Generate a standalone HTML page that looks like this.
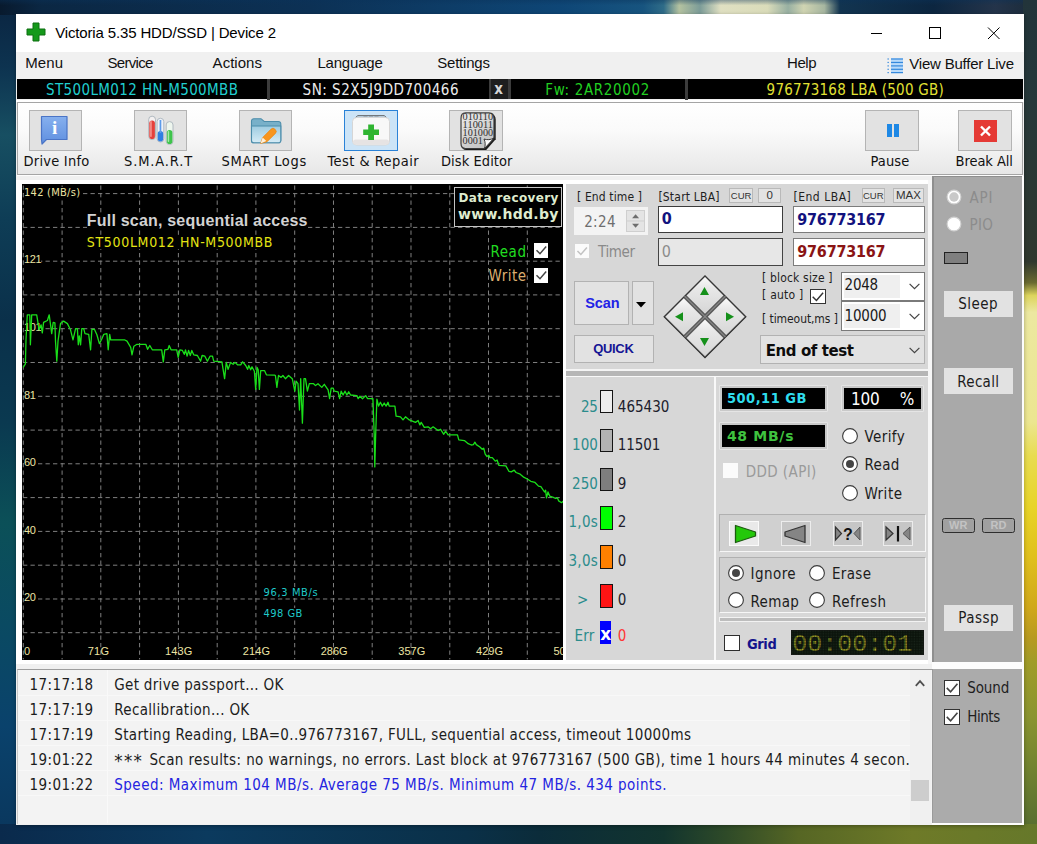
<!DOCTYPE html>
<html lang="en"><head><meta charset="utf-8"><title>Victoria 5.35 HDD/SSD | Device 2</title>
<style>
html,body{margin:0;padding:0}
body{width:1037px;height:844px;overflow:hidden;position:relative;background:#0b3350;font-family:"Liberation Sans",sans-serif}
#root{position:absolute;left:0;top:0;width:1037px;height:844px;overflow:hidden}
#root div,#root svg{position:absolute;box-sizing:border-box}
.t{position:absolute;white-space:pre;line-height:1;margin:0;padding:0}
.s{display:inline-block;width:0;height:0}

</style></head><body><div id="root">
<div id="wall" style="left:0;top:0;width:1037px;height:844px;background:#0b3350"></div>
<div style="left:0;top:0;width:17px;height:844px;background:linear-gradient(180deg,#0a2440 0%,#0d3350 8%,#174f62 16%,#0e3d56 26%,#0a304a 38%,#0a3950 50%,#0b5058 62%,#0a4a62 74%,#0a426c 86%,#0a365c 100%)"></div>
<div style="left:0;top:0;width:1037px;height:15px;background:linear-gradient(180deg,rgba(10,50,90,.400) 0%,rgba(10,50,90,0) 35%),linear-gradient(90deg,#081a2e 0%,#0b2743 4%,#0c3155 30%,#0e4676 54%,#17547f 62%,#2f6c88 64%,#b4c2a0 65.500%,#7c9c98 67.500%,#e0e0c2 69.500%,#dadcba 74%,#98b0a2 76%,#d0d4b2 77.500%,#a6b6a0 79.500%,#123450 81%,#0c2640 90%,#24344a 96%,#1a2a38 100%)"></div>
<div style="left:1023px;top:0;width:14px;height:844px;background:linear-gradient(180deg,#22343a 0%,#26383a 12%,#30382e 31%,#6a6a30 33.500%,#dcd45c 35%,#ece8a0 37%,#ece690 50%,#e8dc50 54%,#e8d428 60%,#e0c01c 66%,#d0a81a 72%,#b89a20 75.500%,#a09c28 78.500%,#8a9430 85%,#6e8030 92%,#506830 100%)"></div>
<div style="left:0;top:824px;width:1037px;height:20px;background:linear-gradient(90deg,#0a2a4c 0%,#0b3a5e 20%,#0a3048 45%,#0b2c3a 52%,#12342e 64%,#2e4a28 70%,#566624 77%,#6e7a28 88%,#66782a 100%)"></div>
<div style="left:16px;top:14px;width:1008px;height:811px;background:#f0f0f0;box-shadow:0 1px 4px rgba(0,0,0,.320);"></div>
<div style="left:16px;top:14px;width:1008px;height:38px;background:#ffffff;"></div>
<svg style="left:26px;top:22px" width="20" height="20" viewBox="0 0 20 20"><path d="M7 1h6v6h6v6h-6v6H7v-6H1V7h6z" fill="#14991a" stroke="#0c6e10" stroke-width="1"/></svg>
<span class="t" style='left:55.20px;top:24.80px;font-size:15px;color:#000;font-family:"Liberation Sans",sans-serif;letter-spacing:-0.148px;'>Victoria 5.35 HDD/SSD | Device 2</span>
<svg style="left:860px;top:20px" width="160" height="26" viewBox="0 0 160 26" fill="none" stroke="#000" stroke-width="1"><path d="M11 13.5h11"/><rect x="69.5" y="7.5" width="11" height="11"/><path d="M128 7.5l11.5 11.5M139.5 7.5L128 19"/></svg>
<div style="left:16px;top:52px;width:1008px;height:27px;background:#f0f0f0;"></div>
<span class="t" style='left:25.30px;top:55.00px;font-size:15px;color:#111;font-family:"Liberation Sans",sans-serif;letter-spacing:0.056px;'>Menu</span>
<span class="t" style='left:107.40px;top:55.00px;font-size:15px;color:#111;font-family:"Liberation Sans",sans-serif;letter-spacing:-0.672px;'>Service</span>
<span class="t" style='left:212.60px;top:55.00px;font-size:15px;color:#111;font-family:"Liberation Sans",sans-serif;letter-spacing:0.033px;'>Actions</span>
<span class="t" style='left:317.40px;top:55.00px;font-size:15px;color:#111;font-family:"Liberation Sans",sans-serif;letter-spacing:-0.193px;'>Language</span>
<span class="t" style='left:437.20px;top:55.00px;font-size:15px;color:#111;font-family:"Liberation Sans",sans-serif;letter-spacing:-0.200px;'>Settings</span>
<span class="t" style='left:787.00px;top:55.00px;font-size:15px;color:#111;font-family:"Liberation Sans",sans-serif;letter-spacing:-0.420px;'>Help</span>
<span class="t" style='left:909.30px;top:56.00px;font-size:15px;color:#111;font-family:"Liberation Sans",sans-serif;letter-spacing:-0.210px;'>View Buffer Live</span>
<svg style="left:887px;top:57px" width="17" height="17" viewBox="0 0 17 17"><rect x="4" y="1.400" width="12" height="14.800" fill="#b8dafa"/><g fill="#3488dc"><rect x=".500" y="1.400" width="1.300" height="1.200"/><rect x="4" y="1.400" width="12" height="1.200"/><rect x=".500" y="4.850" width="1.300" height="1.200"/><rect x="4" y="4.850" width="12" height="1.200"/><rect x=".500" y="8.300" width="1.300" height="1.200"/><rect x="4" y="8.300" width="12" height="1.200"/><rect x=".500" y="11.700" width="1.300" height="1.200"/><rect x="4" y="11.700" width="12" height="1.200"/><rect x=".500" y="15.000" width="1.300" height="1.200"/><rect x="4" y="15.000" width="12" height="1.200"/></g></svg>
<div style="left:17px;top:78.8px;width:1006px;height:20.3px;background:#000;"></div>
<div style="left:266.5px;top:79px;width:3.5px;height:20.5px;background:#3c3c3c;"></div>
<div style="left:489px;top:79px;width:21.5px;height:20px;background:#3c3c3c;"></div>
<div style="left:491.3px;top:79px;width:16.4px;height:20px;background:#1e1e1e;"></div>
<div style="left:685px;top:79px;width:3px;height:20.5px;background:#3c3c3c;"></div>
<span class="t" style='left:46.00px;top:82.80px;font-size:15px;color:#21cfd0;font-family:"DejaVu Sans Condensed","Liberation Sans",sans-serif;letter-spacing:0.378px;'>ST500LM012 HN-M500MBB</span>
<span class="t" style='left:302.60px;top:82.80px;font-size:15px;color:#ececec;font-family:"DejaVu Sans Condensed","Liberation Sans",sans-serif;letter-spacing:0.504px;'>SN: S2X5J9DD700466</span>
<span class="t" style='left:494.30px;top:82.30px;font-size:15px;color:#d6d6d6;font-family:"DejaVu Sans Condensed","Liberation Sans",sans-serif;font-weight:700;'>x</span>
<span class="t" style='left:545.30px;top:82.80px;font-size:15px;color:#22cf22;font-family:"DejaVu Sans Condensed","Liberation Sans",sans-serif;letter-spacing:0.643px;'>Fw: 2AR20002</span>
<span class="t" style='left:766.60px;top:82.80px;font-size:15px;color:#e2e234;font-family:"DejaVu Sans Condensed","Liberation Sans",sans-serif;letter-spacing:0.237px;'>976773168 LBA (500 GB)</span>
<div style="left:16px;top:99.5px;width:1008px;height:2px;background:#ffffff;"></div>
<div style="left:17px;top:101.5px;width:1006px;height:73.6px;background:linear-gradient(180deg,#ffffff 0%,#fafafa 40%,#e7e7e7 100%);border:1px solid #a5a5a5;"></div>
<div style="left:17px;top:175.1px;width:1006px;height:1.2px;background:#fdfdfd;"></div>
<div style="left:28.7px;top:110px;width:53.5px;height:40.5px;background:#e2e2e2;border:1px solid #b4b4b4;"></div>
<div style="left:133.8px;top:110px;width:53.5px;height:40.5px;background:#e2e2e2;border:1px solid #b4b4b4;"></div>
<div style="left:238.8px;top:110px;width:53.5px;height:40.5px;background:#e2e2e2;border:1px solid #b4b4b4;"></div>
<div style="left:449px;top:110px;width:53.5px;height:40.5px;background:#e2e2e2;border:1px solid #b4b4b4;"></div>
<div style="left:344px;top:110px;width:53.5px;height:40.5px;background:#cce4f7;border:1px solid #2a82d7;"></div>
<div style="left:865.2px;top:110px;width:53.5px;height:40.5px;background:#e2e2e2;border:1px solid #b4b4b4;"></div>
<div style="left:958px;top:110px;width:53.5px;height:40.5px;background:#e2e2e2;border:1px solid #b4b4b4;"></div>
<span class="t" style='left:23.60px;top:154.20px;font-size:14.5px;color:#111;font-family:"DejaVu Sans Condensed","Liberation Sans",sans-serif;letter-spacing:0.221px;'>Drive Info</span>
<span class="t" style='left:124.00px;top:154.20px;font-size:14.5px;color:#111;font-family:"DejaVu Sans Condensed","Liberation Sans",sans-serif;letter-spacing:0.863px;'>S.M.A.R.T</span>
<span class="t" style='left:221.50px;top:154.20px;font-size:14.5px;color:#111;font-family:"DejaVu Sans Condensed","Liberation Sans",sans-serif;letter-spacing:0.683px;'>SMART Logs</span>
<span class="t" style='left:327.60px;top:154.20px;font-size:14.5px;color:#111;font-family:"DejaVu Sans Condensed","Liberation Sans",sans-serif;letter-spacing:0.449px;'>Test &amp; Repair</span>
<span class="t" style='left:441.00px;top:154.20px;font-size:14.5px;color:#111;font-family:"DejaVu Sans Condensed","Liberation Sans",sans-serif;letter-spacing:0.063px;'>Disk Editor</span>
<span class="t" style='left:870.40px;top:154.20px;font-size:14.5px;color:#111;font-family:"DejaVu Sans Condensed","Liberation Sans",sans-serif;letter-spacing:0.147px;'>Pause</span>
<span class="t" style='left:955.60px;top:154.20px;font-size:14.5px;color:#111;font-family:"DejaVu Sans Condensed","Liberation Sans",sans-serif;letter-spacing:-0.061px;'>Break All</span>
<svg style="left:40px;top:115px" width="30" height="32" viewBox="0 0 30 32"><defs><linearGradient id="bi" x1="0" y1="0" x2="0" y2="1"><stop offset="0" stop-color="#86b0ee"/><stop offset="1" stop-color="#5f8fe0"/></linearGradient></defs><path d="M1.500 1.500H27V24.500H6.500L2 29 1.500 24.500z" fill="url(#bi)" stroke="#4a74c6" stroke-width="1.200" stroke-linejoin="round"/><text x="14.600" y="18.600" font-family="Liberation Serif,serif" font-weight="700" font-size="19" fill="#fff" text-anchor="middle">i</text></svg>
<svg style="left:147px;top:115px" width="30" height="32" viewBox="0 0 30 32"><g stroke="#a9b3bb" stroke-width=".900"><rect x="1.700" y="1.200" width="6.800" height="23.400" rx="3.300" fill="#f4f1f1"/><rect x="10.100" y="3.300" width="6.700" height="23.700" rx="3.300" fill="#eef2f8"/><rect x="19.200" y="6.600" width="6.800" height="22.900" rx="3.300" fill="#eef6ee"/></g><rect x="2.300" y="5.500" width="5.600" height="18.600" rx="2.800" fill="#e4403c"/><rect x="3.200" y="6" width="1.500" height="16" rx=".700" fill="#f59a96"/><rect x="10.700" y="16" width="5.500" height="10.500" rx="2.700" fill="#2f7fe2"/><rect x="12.600" y="5" width="1.700" height="13" fill="#5c9bea"/><rect x="19.800" y="15" width="5.600" height="14" rx="2.800" fill="#3fc44c"/><rect x="20.700" y="16" width="1.500" height="11" rx=".700" fill="#a6e8ab"/></svg>
<svg style="left:250px;top:116px" width="33" height="30" viewBox="0 0 33 30"><defs><linearGradient id="fo" x1="0" y1="0" x2="0" y2="1"><stop offset="0" stop-color="#9dcbe0"/><stop offset="1" stop-color="#d6ecf6"/></linearGradient></defs><path d="M1.500 5a2.300 2.300 0 0 1 2.300-2.300h7.200l3.200 2.800h14.300a2.300 2.300 0 0 1 2.300 2.300v16.700a2.300 2.300 0 0 1-2.300 2.300h-24.700a2.300 2.300 0 0 1-2.300-2.300z" fill="#78b0c9" stroke="#4c8dab" stroke-width="1.100"/><path d="M1.500 10h29.300v14.500a2.300 2.300 0 0 1-2.300 2.300h-24.700a2.300 2.300 0 0 1-2.300-2.300z" fill="url(#fo)" stroke="#4c8dab" stroke-width="1.100"/><path d="M10.500 27.500l2.200-6 8.400-8.400a2.600 2.600 0 0 1 3.700 0l.6.600a2.600 2.600 0 0 1 0 3.700l-8.400 8.400z" fill="#f7961f" stroke="#e8820c" stroke-width=".700"/><path d="M10.500 27.500l2.200-6 3.600 3.600z" fill="#fdf0dc"/></svg>
<svg style="left:351px;top:113px" width="40" height="35" viewBox="0 0 40 35"><path d="M3.500 6l3-3.300h27l3 3.300" fill="none" stroke="#5e5e5e" stroke-width="1"/><path d="M12.500 4.200h15" fill="none" stroke="#5a5a5a" stroke-width="1.100" stroke-dasharray="4 1.500"/><rect x="1.500" y="4.500" width="37" height="27.500" rx="4" fill="#f8f8f8" stroke="#d6d6d6"/><rect x="2" y="26.500" width="36" height="5.200" rx="2.600" fill="#e6e3e3"/><path d="M17.200 11.500h5.800v5h5v5.600h-5v5h-5.800v-5h-5v-5.600h5z" fill="#2eb430"/></svg>
<svg style="left:459px;top:111px" width="38" height="40" viewBox="0 0 38 40"><defs><linearGradient id="sh" x1="0" y1="0" x2=".600" y2="1"><stop offset="0" stop-color="#ececec"/><stop offset="1" stop-color="#c4c4c4"/></linearGradient></defs><path d="M6.500 2.300H30.500Q36 2.300 36 8V27.500L26.500 38.300H6.500Q2 38.300 2 33V8Q2 2.300 6.500 2.300z" fill="#1c1c1c" transform="translate(.700 .700)"/><path d="M6.500 1.800H30Q35 1.800 35 7.500V27L25.500 37.500H6.500Q2 37.500 2 32.500V7.500Q2 1.800 6.500 1.800z" fill="url(#sh)" stroke="#3c3c3c" stroke-width="1.200"/><path d="M35 27C31.500 29 28 29 25 28 26.500 31 26.500 34.500 25.500 37.500z" fill="#fbfbfb" stroke="#2a2a2a" stroke-width=".900"/><g font-family="Liberation Serif,serif" font-size="10" fill="#303030"><text x="3.600" y="9.400" textLength="30.500" lengthAdjust="spacingAndGlyphs">010110</text><text x="3.600" y="17.100" textLength="30.500" lengthAdjust="spacingAndGlyphs">110011</text><text x="3.600" y="24.800" textLength="30.500" lengthAdjust="spacingAndGlyphs">101000</text><text x="3.600" y="32.500" textLength="20.300" lengthAdjust="spacingAndGlyphs">0001</text></g></svg>
<div style="left:886.5px;top:124.4px;width:5.4px;height:12.8px;background:#1e88e5;"></div>
<div style="left:894px;top:124.4px;width:5.4px;height:12.8px;background:#1e88e5;"></div>
<svg style="left:973.500px;top:120px" width="23" height="22" viewBox="0 0 23 22"><rect width="23" height="22" fill="#e53a35"/><path d="M7 6.500l9 9M16 6.500l-9 9" stroke="#fff" stroke-width="2.400" fill="none"/></svg>
<div style="left:16px;top:179.6px;width:550px;height:484px;background:#ffffff;"></div>
<div style="left:21.6px;top:184.2px;width:541.9px;height:475.40000000000003px;background:#000;"></div>
<svg style="left:21.6px;top:184.2px" width="541.9" height="475.4" viewBox="21.6 184.2 541.9 475.4"><g stroke="#808080" stroke-width="1" stroke-dasharray="4.3 3.2" fill="none"><path d="M22.9 185.7V659.6"/><path d="M61.7 185.7V659.6"/><path d="M100.4 185.7V659.6"/><path d="M139.2 185.7V659.6"/><path d="M178.0 185.7V659.6"/><path d="M216.8 185.7V659.6"/><path d="M255.5 185.7V659.6"/><path d="M294.3 185.7V659.6"/><path d="M333.1 185.7V659.6"/><path d="M371.8 185.7V659.6"/><path d="M410.6 185.7V659.6"/><path d="M449.4 185.7V659.6"/><path d="M488.1 185.7V659.6"/><path d="M526.9 185.7V659.6"/><path d="M22.6 193.8H563.5"/><path d="M22.6 227.6H563.5"/><path d="M22.6 261.4H563.5"/><path d="M22.6 295.1H563.5"/><path d="M22.6 328.9H563.5"/><path d="M22.6 362.7H563.5"/><path d="M22.6 396.5H563.5"/><path d="M22.6 430.3H563.5"/><path d="M22.6 464.0H563.5"/><path d="M22.6 497.8H563.5"/><path d="M22.6 531.6H563.5"/><path d="M22.6 565.4H563.5"/><path d="M22.6 599.2H563.5"/><path d="M22.6 632.9H563.5"/></g></svg>
<span class="t" style='left:24.00px;top:186.71px;font-size:11px;color:#ece4a4;font-family:"DejaVu Sans Condensed","Liberation Sans",sans-serif;letter-spacing:0.269px;background:#000;'>142 (MB/s)</span>
<span class="t" style='left:24.00px;top:254.40px;font-size:11px;color:#ece4a4;font-family:"Liberation Sans",sans-serif;letter-spacing:-0.330px;background:#000;'>121</span>
<span class="t" style='left:24.00px;top:322.01px;font-size:11px;color:#ece4a4;font-family:"Liberation Sans",sans-serif;letter-spacing:-0.330px;background:#000;'>101</span>
<span class="t" style='left:24.00px;top:389.60px;font-size:11px;color:#ece4a4;font-family:"Liberation Sans",sans-serif;letter-spacing:-0.250px;background:#000;'>81</span>
<span class="t" style='left:24.00px;top:457.21px;font-size:11px;color:#ece4a4;font-family:"Liberation Sans",sans-serif;letter-spacing:-0.250px;background:#000;'>60</span>
<span class="t" style='left:24.00px;top:524.81px;font-size:11px;color:#ece4a4;font-family:"Liberation Sans",sans-serif;letter-spacing:-0.250px;background:#000;'>40</span>
<span class="t" style='left:24.00px;top:591.71px;font-size:11px;color:#ece4a4;font-family:"Liberation Sans",sans-serif;letter-spacing:-0.250px;background:#000;'>20</span>
<svg style="left:21.6px;top:184.2px" width="541.9" height="475.4" viewBox="21.6 184.2 541.9 475.4"><polyline fill="none" stroke="#1ade1a" stroke-width="1.3" stroke-linejoin="round" points="22.8,367.7 25.0,364.0 25.6,340.0 26.9,315.0 29.4,315.0 30.0,345.0 31.3,315.0 36.3,315.0 37.5,322.6 38.8,330.0 40.7,325.0 41.9,333.0 43.2,322.6 47.0,320.7 48.8,315.0 50.0,323.8 51.3,333.8 52.8,322.6 54.5,323.0 55.1,341.4 56.4,361.4 57.6,341.4 60.1,323.8 63.2,321.3 67.0,323.8 70.1,330.0 72.6,340.0 75.2,328.8 77.0,328.8 77.9,345.0 78.9,336.0 80.2,345.0 81.4,328.8 83.3,328.8 84.6,333.8 88.3,334.5 90.2,350.0 91.5,329.5 94.0,329.5 96.5,335.0 99.0,343.9 101.5,338.9 103.4,334.5 106.5,333.8 107.8,350.0 109.3,334.5 110.3,340.0 124.0,340.0 126.6,341.4 130.3,347.6 131.6,355.0 133.5,346.4 136.6,344.5 145.4,344.5 147.2,349.5 149.4,345.7 151.9,350.0 161.3,350.0 162.9,362.0 164.4,350.0 167.6,349.5 168.8,345.7 170.7,350.0 176.3,350.0 177.8,357.6 179.5,350.0 182.0,350.7 183.9,354.5 185.1,350.0 186.7,356.4 188.2,350.7 189.9,355.7 191.4,350.7 193.3,355.0 197.0,355.7 200.2,361.4 201.7,355.7 204.5,356.4 207.0,361.4 209.6,356.4 212.1,356.4 213.3,361.4 221.5,362.0 224.2,378.9 225.9,362.6 227.7,369.5 230.2,362.6 232.7,364.5 234.6,362.6 237.1,365.0 240.3,365.0 242.2,362.0 245.3,365.7 247.2,369.5 248.4,365.7 250.3,370.0 251.6,367.0 254.0,371.4 255.3,389.6 256.6,367.6 257.8,370.0 259.0,389.6 260.3,370.8 264.1,370.8 266.0,375.0 274.1,375.3 275.0,375.7 276.5,387.6 278.1,375.7 280.7,377.6 282.5,375.7 285.0,378.9 288.2,375.7 291.9,378.9 294.4,391.4 295.7,381.4 297.6,383.9 299.1,410.2 300.3,378.9 302.0,423.4 303.6,378.9 305.1,378.9 307.0,391.4 308.9,383.9 313.2,383.9 315.1,385.8 317.6,383.9 321.4,387.6 323.9,384.5 327.7,390.1 329.2,398.9 330.8,388.3 332.7,388.3 333.9,391.4 337.7,392.0 339.2,398.9 340.8,391.4 342.7,395.2 344.6,391.4 346.5,395.2 348.3,392.0 350.2,395.2 356.5,395.8 357.8,398.9 359.6,396.4 362.1,398.9 365.3,395.8 367.2,398.9 372.5,398.8 373.8,433.9 374.4,467.1 375.3,433.9 376.5,399.4 378.2,406.3 380.0,402.5 381.9,406.3 383.8,403.2 385.7,406.3 387.6,402.5 388.8,406.3 394.5,406.3 395.7,416.3 400.1,417.0 402.6,420.1 405.1,417.0 408.9,420.1 415.1,422.6 417.7,420.7 419.5,425.1 420.8,422.6 423.9,427.6 427.7,427.0 430.2,428.9 432.7,427.0 437.7,430.7 440.2,429.5 443.4,434.5 445.2,431.4 447.7,435.1 457.1,435.1 458.4,440.1 464.0,440.8 467.8,443.9 470.9,445.2 473.0,444.8 474.5,442.4 475.9,444.8 479.5,447.2 481.8,449.5 483.3,448.4 484.8,454.3 486.6,456.7 488.4,455.5 489.5,457.8 491.9,457.8 494.9,461.4 496.7,460.2 498.4,465.5 505.5,466.1 508.5,471.5 510.9,472.1 513.8,470.3 515.6,472.7 519.8,474.4 523.3,477.4 526.9,479.2 530.4,481.5 534.6,482.7 538.1,486.3 540.5,486.9 544.1,492.2 545.2,490.4 546.1,498.1 547.6,492.2 549.4,496.4 552.9,497.5 555.3,498.7 557.1,498.1 558.3,501.1 561.2,502.9 563.0,501.1"/></svg>
<span class="t" style='left:24.00px;top:645.71px;font-size:11px;color:#ece4a4;font-family:"Liberation Sans",sans-serif;'>0</span>
<span class="t" style='left:87.70px;top:645.71px;font-size:11px;color:#ece4a4;font-family:"Liberation Sans",sans-serif;letter-spacing:0.252px;'>71G</span>
<span class="t" style='left:165.00px;top:645.71px;font-size:11px;color:#ece4a4;font-family:"Liberation Sans",sans-serif;letter-spacing:0.126px;'>143G</span>
<span class="t" style='left:242.80px;top:645.71px;font-size:11px;color:#ece4a4;font-family:"Liberation Sans",sans-serif;letter-spacing:0.126px;'>214G</span>
<span class="t" style='left:320.80px;top:645.71px;font-size:11px;color:#ece4a4;font-family:"Liberation Sans",sans-serif;letter-spacing:-0.074px;'>286G</span>
<span class="t" style='left:398.30px;top:645.71px;font-size:11px;color:#ece4a4;font-family:"Liberation Sans",sans-serif;letter-spacing:0.026px;'>357G</span>
<span class="t" style='left:476.00px;top:645.71px;font-size:11px;color:#ece4a4;font-family:"Liberation Sans",sans-serif;letter-spacing:0.026px;'>429G</span>
<span class="t" style='left:553.40px;top:645.71px;font-size:11px;color:#ece4a4;font-family:"Liberation Sans",sans-serif;clip-path:inset(0 2.5px 0 0);'>50</span>
<span class="t" style='left:86.80px;top:213.40px;font-size:16px;color:#d2d2d2;font-family:"Liberation Sans",sans-serif;font-weight:700;letter-spacing:0.203px;background:#000;'>Full scan, sequential access</span>
<span class="t" style='left:86.80px;top:234.70px;font-size:14px;color:#e4e414;font-family:"DejaVu Sans Condensed","Liberation Sans",sans-serif;letter-spacing:0.678px;background:#000;'>ST500LM012 HN-M500MBB</span>
<span class="t" style='left:263.60px;top:586.71px;font-size:11px;color:#1fc9c9;font-family:"DejaVu Sans Condensed","Liberation Sans",sans-serif;letter-spacing:0.637px;background:#000;'>96,3 MB/s</span>
<span class="t" style='left:263.60px;top:608.01px;font-size:11px;color:#1fc9c9;font-family:"DejaVu Sans Condensed","Liberation Sans",sans-serif;letter-spacing:0.440px;background:#000;'>498 GB</span>
<div style="left:454px;top:186.6px;width:108.4px;height:40px;background:#000;border:1px solid #c4c4c4;"></div>
<span class="t" style='left:458.50px;top:191.70px;font-size:12px;color:#dfeccf;font-family:"DejaVu Sans","Liberation Sans",sans-serif;font-weight:700;letter-spacing:0.393px;'>Data recovery</span>
<span class="t" style='left:458.00px;top:207.20px;font-size:14px;color:#dfeccf;font-family:"DejaVu Sans","Liberation Sans",sans-serif;font-weight:700;letter-spacing:0.300px;'>www.hdd.by</span>
<span class="t" style='left:490.50px;top:244.71px;font-size:15px;color:#20dc20;font-family:"DejaVu Sans Condensed","Liberation Sans",sans-serif;letter-spacing:0.547px;background:#000;'>Read</span>
<span class="t" style='left:488.60px;top:269.30px;font-size:15px;color:#dcae70;font-family:"DejaVu Sans Condensed","Liberation Sans",sans-serif;letter-spacing:0.459px;background:#000;'>Write</span>
<div style="left:533.5px;top:243px;width:14.5px;height:14.5px;background:#fff;"></div><svg style="left:533.5px;top:243px" width="14.5" height="14.5" viewBox="0 0 15 15"><path d="M2.600 7.400l3.600 3.700L12.600 3.600" fill="none" stroke="#444" stroke-width="1.5"/></svg>
<div style="left:533.5px;top:268.2px;width:14.5px;height:14.5px;background:#fff;"></div><svg style="left:533.5px;top:268.2px" width="14.5" height="14.5" viewBox="0 0 15 15"><path d="M2.600 7.400l3.600 3.700L12.600 3.600" fill="none" stroke="#444" stroke-width="1.5"/></svg>
<div style="left:565.6px;top:180px;width:363px;height:4px;background:#fff;"></div>
<div style="left:565.6px;top:184px;width:362px;height:185px;background:#d7d7d7;"></div>
<div style="left:565.6px;top:369px;width:362px;height:2px;background:#f4f4f4;"></div>
<div style="left:565.6px;top:371px;width:362px;height:5px;background:#b6b6b6;"></div>
<div style="left:927.6px;top:180px;width:5px;height:484px;background:#f6f6f6;"></div>
<span class="t" style='left:577.00px;top:190.81px;font-size:12px;color:#1e1e1e;font-family:"DejaVu Sans Condensed","Liberation Sans",sans-serif;letter-spacing:0.125px;'>[ End time ]</span>
<div style="left:573.8px;top:207.3px;width:74px;height:27.6px;background:#f3f3f3;"></div>
<span class="t" style='left:584.20px;top:214.80px;font-size:15px;color:#6e6e6e;font-family:"DejaVu Sans Condensed","Liberation Sans",sans-serif;letter-spacing:0.329px;'>2:24</span>
<div style="left:626px;top:209.8px;width:19.2px;height:22px;background:#e4e4e4;border:1px solid #cfcfcf;"></div>
<svg style="left:626px;top:209.800px" width="19.200" height="22" viewBox="0 0 19 22"><path d="M0 11h19" stroke="#cfcfcf"/><path d="M6 8.200l3.500-4 3.500 4zM6 13.800l3.500 4 3.500-4z" fill="#6e6e6e"/></svg>
<div style="left:574.8px;top:244.3px;width:14.2px;height:14.2px;background:#fbfbfb;"></div><svg style="left:574.8px;top:244.3px" width="14.2" height="14.2" viewBox="0 0 15 15"><path d="M2.600 7.400l3.600 3.700L12.600 3.600" fill="none" stroke="#c2c2c2" stroke-width="1.6"/></svg>
<span class="t" style='left:598.00px;top:244.80px;font-size:15px;color:#8a8a8a;font-family:"DejaVu Sans Condensed","Liberation Sans",sans-serif;letter-spacing:-0.383px;'>Timer</span>
<span class="t" style='left:658.40px;top:190.61px;font-size:12px;color:#1e1e1e;font-family:"DejaVu Sans Condensed","Liberation Sans",sans-serif;letter-spacing:0.207px;'>[Start LBA]</span>
<span class="t" style='left:793.40px;top:190.61px;font-size:12px;color:#1e1e1e;font-family:"DejaVu Sans Condensed","Liberation Sans",sans-serif;letter-spacing:0.527px;'>[End LBA]</span>
<div style="left:729.3px;top:187.6px;width:23.700000000000045px;height:15.3px;background:#e3e3e3;border:1px solid #b9b9b9;"></div>
<div style="left:729.3px;top:187.600px;width:23.7px;height:15.300px;line-height:15.500px;text-align:center;font-size:9.5px;color:#333;font-family:"DejaVu Sans Condensed","Liberation Sans",sans-serif">CUR</div>
<div style="left:758.2px;top:187.6px;width:22.799999999999955px;height:15.3px;background:#e3e3e3;border:1px solid #b9b9b9;"></div>
<div style="left:758.2px;top:187.600px;width:22.8px;height:15.300px;line-height:15.500px;text-align:center;font-size:11.5px;color:#333;font-family:"DejaVu Sans Condensed","Liberation Sans",sans-serif">0</div>
<div style="left:861.7px;top:187.6px;width:23.199999999999932px;height:15.3px;background:#e3e3e3;border:1px solid #b9b9b9;"></div>
<div style="left:861.7px;top:187.600px;width:23.2px;height:15.300px;line-height:15.500px;text-align:center;font-size:9.5px;color:#333;font-family:"DejaVu Sans Condensed","Liberation Sans",sans-serif">CUR</div>
<div style="left:893.2px;top:187.6px;width:30.399999999999977px;height:15.3px;background:#e3e3e3;border:1px solid #b9b9b9;"></div>
<div style="left:893.2px;top:187.600px;width:30.4px;height:15.300px;line-height:15.500px;text-align:center;font-size:11.5px;color:#333;font-family:"DejaVu Sans Condensed","Liberation Sans",sans-serif">MAX</div>
<div style="left:657.5px;top:206px;width:125.3px;height:27.2px;background:#fff;border:1.500px solid #3c3c3c;"></div>
<div style="left:657.5px;top:238.2px;width:125.3px;height:27.4px;background:#e7e7e7;border:1.500px solid #444;"></div>
<div style="left:793px;top:206px;width:132px;height:27.2px;background:#fff;border:1px solid #7c7c7c;"></div>
<div style="left:793px;top:238.2px;width:132px;height:27.4px;background:#fff;border:1px solid #7c7c7c;"></div>
<span class="t" style='left:661.80px;top:211.31px;font-size:16px;color:#12127e;font-family:"DejaVu Sans Condensed","Liberation Sans",sans-serif;font-weight:700;'>0</span>
<span class="t" style='left:661.80px;top:243.51px;font-size:16px;color:#8c8c8c;font-family:"DejaVu Sans Condensed","Liberation Sans",sans-serif;'>0</span>
<span class="t" style='left:797.30px;top:211.51px;font-size:16px;color:#12127e;font-family:"DejaVu Sans Condensed","Liberation Sans",sans-serif;font-weight:700;letter-spacing:-0.230px;'>976773167</span>
<span class="t" style='left:797.30px;top:243.81px;font-size:16px;color:#8a1414;font-family:"DejaVu Sans Condensed","Liberation Sans",sans-serif;font-weight:700;letter-spacing:-0.230px;'>976773167</span>
<div style="left:574.2px;top:281.3px;width:55.3px;height:44px;background:#e2e2e2;border:1px solid #b2b2b2;"></div>
<span class="t" style='left:585.30px;top:295.81px;font-size:14.5px;color:#2222e6;font-family:"Liberation Sans",sans-serif;font-weight:700;letter-spacing:-0.124px;'>Scan</span>
<div style="left:631.9px;top:281.3px;width:22px;height:44px;background:#e2e2e2;border:1px solid #b2b2b2;"></div>
<svg style="left:636px;top:302.300px" width="10" height="6" viewBox="0 0 10 6"><path d="M0 0h10L5 5.500z" fill="#000"/></svg>
<div style="left:574.2px;top:335.3px;width:79.7px;height:27.6px;background:#e2e2e2;border:1px solid #b2b2b2;"></div>
<span class="t" style='left:593.30px;top:342.01px;font-size:13px;color:#151594;font-family:"Liberation Sans",sans-serif;font-weight:700;letter-spacing:-0.348px;'>QUICK</span>
<svg style="left:660px;top:272px" width="90" height="90" viewBox="-45 -45 90 90"><defs><linearGradient id="dg" x1="0" y1="0" x2="1" y2="1"><stop offset="0" stop-color="#fafafa"/><stop offset=".3" stop-color="#e8e8e8"/><stop offset="1" stop-color="#d6d6d6"/></linearGradient></defs><g transform="translate(0 -0.300) rotate(45)"><rect x="-29" y="-29" width="58" height="58" fill="#5a5a5a" stroke="#2e2e2e" stroke-width="1"/><rect x="-28" y="-28" width="26" height="26" fill="url(#dg)"/><rect x="2" y="-28" width="26" height="26" fill="url(#dg)"/><rect x="-28" y="2" width="26" height="26" fill="url(#dg)"/><rect x="2" y="2" width="26" height="26" fill="url(#dg)"/><path d="M-29 0h58M0 -29v58" stroke="#8a8a8a" stroke-width="1"/></g><g fill="#15901a"><path d="M-0.500 -30l4.500 8h-9z"/><path d="M-0.500 29l4.500 -8h-9z"/><path d="M-30 -0.300l8 -4.500v9z"/><path d="M29 -0.300l-8 -4.500v9z"/></g></svg>
<span class="t" style='left:762.10px;top:271.91px;font-size:12px;color:#1e1e1e;font-family:"DejaVu Sans Condensed","Liberation Sans",sans-serif;letter-spacing:0.162px;'>[ block size ]</span>
<span class="t" style='left:762.10px;top:289.41px;font-size:12px;color:#1e1e1e;font-family:"DejaVu Sans Condensed","Liberation Sans",sans-serif;letter-spacing:0.217px;'>[ auto ]</span>
<span class="t" style='left:762.10px;top:312.91px;font-size:12px;color:#1e1e1e;font-family:"DejaVu Sans Condensed","Liberation Sans",sans-serif;letter-spacing:-0.086px;'>[ timeout,ms ]</span>
<div style="left:810.4px;top:288.6px;width:15.6px;height:15.6px;background:#fff;border:1px solid #333;"></div><svg style="left:810.4px;top:288.6px" width="15.6" height="15.6" viewBox="0 0 15 15"><path d="M2.600 7.400l3.600 3.700L12.600 3.600" fill="none" stroke="#333" stroke-width="1.4"/></svg>
<div style="left:840.7px;top:271.5px;width:84px;height:29.2px;background:#fff;border:1px solid #7a7a7a;"></div>
<div style="left:843.7px;top:274.5px;width:56px;height:23.2px;background:#efefef;"></div>
<svg style="left:908.7px;top:283.1px" width="11" height="7" viewBox="0 0 11 7"><path d="M.600 .800l4.900 4.900 4.900-4.900" fill="none" stroke="#444" stroke-width="1.200"/></svg>
<div style="left:840.7px;top:301.4px;width:84px;height:29.2px;background:#fff;border:1px solid #7a7a7a;"></div>
<div style="left:843.7px;top:304.4px;width:56px;height:23.2px;background:#efefef;"></div>
<svg style="left:908.7px;top:313.0px" width="11" height="7" viewBox="0 0 11 7"><path d="M.600 .800l4.900 4.900 4.900-4.900" fill="none" stroke="#444" stroke-width="1.200"/></svg>
<span class="t" style='left:844.60px;top:278.41px;font-size:15px;color:#1a1a1a;font-family:"DejaVu Sans Condensed","Liberation Sans",sans-serif;letter-spacing:-0.248px;'>2048</span>
<span class="t" style='left:844.60px;top:308.80px;font-size:15px;color:#1a1a1a;font-family:"DejaVu Sans Condensed","Liberation Sans",sans-serif;letter-spacing:-0.230px;'>10000</span>
<div style="left:760.4px;top:335.4px;width:164.3px;height:28.6px;background:#e2e2e2;border:1px solid #b2b2b2;"></div>
<svg style="left:908.7px;top:346.7px" width="11" height="7" viewBox="0 0 11 7"><path d="M.600 .800l4.900 4.900 4.900-4.900" fill="none" stroke="#444" stroke-width="1.200"/></svg>
<span class="t" style='left:765.70px;top:344.00px;font-size:15px;color:#0c0c0c;font-family:"DejaVu Sans","Liberation Sans",sans-serif;font-weight:700;letter-spacing:-0.419px;'>End of test</span>
<div style="left:565.6px;top:376px;width:362px;height:1.2px;background:#f8f8f8;"></div>
<div style="left:565.6px;top:377px;width:148.6px;height:282.5px;background:#d7d7d7;"></div>
<div style="left:714.2px;top:377px;width:1.6px;height:282.5px;background:#f8f8f8;"></div>
<div style="left:715.8px;top:377px;width:211.8px;height:282.5px;background:#d7d7d7;"></div>
<div style="left:565.6px;top:659.5px;width:362px;height:4px;background:#fff;"></div>
<span class="t" style='left:581.00px;top:399.91px;font-size:15px;color:#2b8c8c;font-family:"DejaVu Sans Condensed","Liberation Sans",sans-serif;letter-spacing:-0.372px;'>25</span>
<div style="left:600px;top:389.6px;width:12.9px;height:23.8px;background:#ededed;border:1.300px solid #141414;"></div>
<span class="t" style='left:617.80px;top:399.91px;font-size:15px;color:#20202c;font-family:"DejaVu Sans Condensed","Liberation Sans",sans-serif;'>465430</span>
<span class="t" style='left:572.10px;top:437.91px;font-size:15px;color:#2b8c8c;font-family:"DejaVu Sans Condensed","Liberation Sans",sans-serif;letter-spacing:-0.033px;'>100</span>
<div style="left:600px;top:428.6px;width:12.9px;height:23.8px;background:#b2b2b2;border:1.300px solid #141414;"></div>
<span class="t" style='left:617.80px;top:437.91px;font-size:15px;color:#20202c;font-family:"DejaVu Sans Condensed","Liberation Sans",sans-serif;letter-spacing:-0.080px;'>11501</span>
<span class="t" style='left:572.10px;top:477.00px;font-size:15px;color:#2b8c8c;font-family:"DejaVu Sans Condensed","Liberation Sans",sans-serif;letter-spacing:-0.033px;'>250</span>
<div style="left:600px;top:467.7px;width:12.9px;height:23.8px;background:#7e7e7e;border:1.300px solid #141414;"></div>
<span class="t" style='left:617.80px;top:477.00px;font-size:15px;color:#20202c;font-family:"DejaVu Sans Condensed","Liberation Sans",sans-serif;'>9</span>
<span class="t" style='left:568.50px;top:514.80px;font-size:15px;color:#2b8c8c;font-family:"DejaVu Sans Condensed","Liberation Sans",sans-serif;letter-spacing:0.272px;'>1,0s</span>
<div style="left:600px;top:506px;width:12.9px;height:23.8px;background:#00ff00;border:1.300px solid #141414;"></div>
<span class="t" style='left:617.80px;top:514.80px;font-size:15px;color:#20202c;font-family:"DejaVu Sans Condensed","Liberation Sans",sans-serif;'>2</span>
<span class="t" style='left:568.50px;top:553.91px;font-size:15px;color:#2b8c8c;font-family:"DejaVu Sans Condensed","Liberation Sans",sans-serif;letter-spacing:0.272px;'>3,0s</span>
<div style="left:600px;top:545px;width:12.9px;height:23.8px;background:#ff8000;border:1.300px solid #141414;"></div>
<span class="t" style='left:617.80px;top:553.91px;font-size:15px;color:#20202c;font-family:"DejaVu Sans Condensed","Liberation Sans",sans-serif;'>0</span>
<span class="t" style='left:577.00px;top:593.21px;font-size:15px;color:#2b8c8c;font-family:"DejaVu Sans Condensed","Liberation Sans",sans-serif;'>&gt;</span>
<div style="left:600px;top:584px;width:12.9px;height:23.8px;background:#ff1414;border:1.300px solid #141414;"></div>
<span class="t" style='left:617.80px;top:593.21px;font-size:15px;color:#20202c;font-family:"DejaVu Sans Condensed","Liberation Sans",sans-serif;'>0</span>
<span class="t" style='left:574.50px;top:628.50px;font-size:15px;color:#2b8c8c;font-family:"DejaVu Sans Condensed","Liberation Sans",sans-serif;letter-spacing:0.220px;'>Err</span>
<div style="left:599.9px;top:621px;width:11.6px;height:22.6px;background:#0000fe;"></div>
<span class="t" style='left:600.20px;top:626.31px;font-size:17px;color:#fff;font-family:"DejaVu Sans","Liberation Sans",sans-serif;font-weight:700;'>x</span>
<span class="t" style='left:617.80px;top:628.50px;font-size:15px;color:#ff3434;font-family:"DejaVu Sans Condensed","Liberation Sans",sans-serif;'>0</span>
<div style="left:719.8px;top:385.6px;width:107.3px;height:25.6px;background:#000;border:2px solid #c9c9c9;box-shadow:0 0 0 .600px #efefef;"></div>
<div style="left:841.9px;top:385.6px;width:81.1px;height:25.6px;background:#000;border:2px solid #c9c9c9;box-shadow:0 0 0 .600px #efefef;"></div>
<div style="left:719.8px;top:422.7px;width:107.3px;height:26.5px;background:#000;border:2px solid #c9c9c9;box-shadow:0 0 0 .600px #efefef;"></div>
<span class="t" style='left:726.90px;top:391.20px;font-size:14.5px;color:#2fdcec;font-family:"DejaVu Sans Condensed","Liberation Sans",sans-serif;font-weight:700;letter-spacing:0.509px;'>500,11 GB</span>
<span class="t" style='left:851.00px;top:391.11px;font-size:17px;color:#fff;font-family:"DejaVu Sans Condensed","Liberation Sans",sans-serif;letter-spacing:-0.194px;'>100</span>
<span class="t" style='left:899.80px;top:391.11px;font-size:17px;color:#fff;font-family:"DejaVu Sans Condensed","Liberation Sans",sans-serif;'>%</span>
<span class="t" style='left:726.90px;top:429.20px;font-size:14px;color:#3fc23f;font-family:"DejaVu Sans","Liberation Sans",sans-serif;font-weight:700;letter-spacing:0.699px;'>48 MB/s</span>
<div style="left:723.4px;top:463.3px;width:14.6px;height:14.6px;background:#fbfbfb;"></div>
<span class="t" style='left:745.80px;top:465.41px;font-size:15px;color:#9a9a9a;font-family:"DejaVu Sans Condensed","Liberation Sans",sans-serif;letter-spacing:0.395px;'>DDD (API)</span>
<svg style="left:839.5px;top:425.6px" width="20" height="20" viewBox="0 0 20 20"><circle cx="10" cy="10" r="7.4" fill="#fff" stroke="#3a3a3a" stroke-width="1.100"/></svg>
<span class="t" style='left:864.40px;top:429.61px;font-size:15px;color:#1c1c1c;font-family:"DejaVu Sans Condensed","Liberation Sans",sans-serif;letter-spacing:0.452px;'>Verify</span>
<svg style="left:839.5px;top:454.4px" width="20" height="20" viewBox="0 0 20 20"><circle cx="10" cy="10" r="7.4" fill="#fff" stroke="#3a3a3a" stroke-width="1.100"/><circle cx="10" cy="10" r="4.0" fill="#444"/></svg>
<span class="t" style='left:864.40px;top:458.41px;font-size:15px;color:#1c1c1c;font-family:"DejaVu Sans Condensed","Liberation Sans",sans-serif;letter-spacing:0.380px;'>Read</span>
<svg style="left:839.5px;top:483.2px" width="20" height="20" viewBox="0 0 20 20"><circle cx="10" cy="10" r="7.4" fill="#fff" stroke="#3a3a3a" stroke-width="1.100"/></svg>
<span class="t" style='left:864.40px;top:487.41px;font-size:15px;color:#1c1c1c;font-family:"DejaVu Sans Condensed","Liberation Sans",sans-serif;letter-spacing:0.509px;'>Write</span>
<div style="left:719.1px;top:514.1px;width:206.7px;height:37.5px;background:#d0d0d0;border:1px solid;border-color:#b0b0b0 #f6f6f6 #f6f6f6 #b0b0b0;"></div>
<div style="left:729.1px;top:521.3px;width:30.4px;height:24.3px;background:#e9e9e9;border:1.500px solid #fafafa;"></div>
<svg style="left:734px;top:524px" width="24" height="20" viewBox="0 0 24 20"><path d="M1.500 1.500v17l20-6.500v-4z" fill="#24c80a" stroke="#1c5c10" stroke-width="1.300" stroke-linejoin="round"/></svg>
<div style="left:780.5px;top:521.3px;width:30.4px;height:24.3px;background:#c6c6c6;border:1px solid #ededed;"></div>
<svg style="left:783px;top:524px" width="24" height="20" viewBox="0 0 24 20"><path d="M22 1.500v17l-20-6.500v-4z" fill="#858585" stroke="#333" stroke-width="1.300" stroke-linejoin="round"/></svg>
<div style="left:832.6px;top:521.3px;width:30px;height:24.3px;background:#c6c6c6;border:1px solid #ededed;"></div>
<svg style="left:834px;top:524px" width="28" height="20" viewBox="0 0 28 20"><path d="M1.500 3v13l6-6.500z" fill="#858585" stroke="#333" stroke-width="1.200"/><path d="M26 3v13l-6-6.500z" fill="#858585" stroke="#555" stroke-width="1"/><text x="13.800" y="16" text-anchor="middle" font-family="Liberation Sans,sans-serif" font-weight="700" font-size="16" fill="#111">?</text></svg>
<div style="left:882.5px;top:521.3px;width:30.4px;height:24.3px;background:#c6c6c6;border:1px solid #ededed;"></div>
<svg style="left:884px;top:524px" width="28" height="20" viewBox="0 0 28 20"><path d="M2 3v13l7-6.500z" fill="#858585" stroke="#333" stroke-width="1.200"/><path d="M26 3v13l-7-6.500z" fill="#858585" stroke="#555" stroke-width="1"/><path d="M14 2v15.500" stroke="#111" stroke-width="2.200"/></svg>
<div style="left:719.1px;top:557.1px;width:206.7px;height:56px;background:#d0d0d0;border:1px solid;border-color:#b0b0b0 #f6f6f6 #f6f6f6 #b0b0b0;"></div>
<svg style="left:725.6px;top:562.9px" width="20" height="20" viewBox="0 0 20 20"><circle cx="10" cy="10" r="7.4" fill="#fff" stroke="#3a3a3a" stroke-width="1.100"/><circle cx="10" cy="10" r="4.0" fill="#444"/></svg>
<span class="t" style='left:750.60px;top:567.41px;font-size:15px;color:#1c1c1c;font-family:"DejaVu Sans Condensed","Liberation Sans",sans-serif;letter-spacing:0.442px;'>Ignore</span>
<svg style="left:806.7px;top:562.9px" width="20" height="20" viewBox="0 0 20 20"><circle cx="10" cy="10" r="7.4" fill="#fff" stroke="#3a3a3a" stroke-width="1.100"/></svg>
<span class="t" style='left:831.90px;top:567.41px;font-size:15px;color:#1c1c1c;font-family:"DejaVu Sans Condensed","Liberation Sans",sans-serif;letter-spacing:0.353px;'>Erase</span>
<svg style="left:725.6px;top:590.4px" width="20" height="20" viewBox="0 0 20 20"><circle cx="10" cy="10" r="7.4" fill="#fff" stroke="#3a3a3a" stroke-width="1.100"/></svg>
<span class="t" style='left:750.60px;top:594.50px;font-size:15px;color:#1c1c1c;font-family:"DejaVu Sans Condensed","Liberation Sans",sans-serif;letter-spacing:0.325px;'>Remap</span>
<svg style="left:806.7px;top:590.4px" width="20" height="20" viewBox="0 0 20 20"><circle cx="10" cy="10" r="7.4" fill="#fff" stroke="#3a3a3a" stroke-width="1.100"/></svg>
<span class="t" style='left:831.90px;top:594.50px;font-size:15px;color:#1c1c1c;font-family:"DejaVu Sans Condensed","Liberation Sans",sans-serif;letter-spacing:0.557px;'>Refresh</span>
<div style="left:719.1px;top:616.7px;width:206.7px;height:5px;background:#bdbdbd;border:1px solid #f2f2f2;"></div>
<div style="left:724.1px;top:634.7px;width:15.8px;height:16px;background:#fff;border:1.200px solid #2e2e2e;"></div>
<span class="t" style='left:746.90px;top:637.20px;font-size:14.5px;color:#14148c;font-family:"DejaVu Sans Condensed","Liberation Sans",sans-serif;font-weight:700;letter-spacing:-0.351px;'>Grid</span>
<svg style="left:790.700px;top:629.700px" width="133" height="25" viewBox="0 0 133 25"><defs><pattern id="dots" width="2.600" height="2.600" patternUnits="userSpaceOnUse"><rect width="2.600" height="2.600" fill="#0a120a"/><rect x=".500" y=".500" width="1.400" height="1.400" fill="#19251a"/></pattern><pattern id="ld" width="2.600" height="2.600" patternUnits="userSpaceOnUse"><rect width="2.600" height="2.600" fill="#2c2c0c"/><rect x=".400" y=".400" width="1.800" height="1.800" fill="#d2d230"/></pattern></defs><rect width="133" height="25" fill="url(#dots)"/><text x="1.300" y="20.900" font-family="Liberation Mono,monospace" font-size="24" fill="url(#ld)" textLength="120" lengthAdjust="spacingAndGlyphs" opacity=".8">00:00:01</text><rect width="133" height="25" fill="none" stroke="#1a1a1a"/></svg>
<div style="left:932px;top:176px;width:90.4px;height:485.5px;background:#a9a9a9;border-left:2.300px solid #8f8f8f;border-top:1px solid #8f8f8f;"></div>
<div style="left:932.4px;top:661.5px;width:91px;height:7px;background:#fdfdfd;"></div>
<div style="left:932.4px;top:668.5px;width:89.6px;height:155px;background:#ababab;border-left:1px solid #9a9a9a;"></div>
<div style="left:1022px;top:176px;width:2px;height:649px;background:#fdfdfd;"></div>
<div style="left:932px;top:823.4px;width:92px;height:1.6px;background:#fdfdfd;"></div>
<svg style="left:944.2px;top:186.6px" width="20" height="20" viewBox="0 0 20 20"><circle cx="10" cy="10" r="6.9" fill="#fff" stroke="#d0d0d0" stroke-width="1.100"/><circle cx="10" cy="10" r="4.7" fill="#c9c9c9"/></svg>
<span class="t" style='left:969.40px;top:190.61px;font-size:15px;color:#8c8c8c;font-family:"DejaVu Sans Condensed","Liberation Sans",sans-serif;letter-spacing:0.878px;'>API</span>
<svg style="left:944.2px;top:214.0px" width="20" height="20" viewBox="0 0 20 20"><circle cx="10" cy="10" r="6.9" fill="#fff" stroke="#d0d0d0" stroke-width="1.100"/></svg>
<span class="t" style='left:969.40px;top:218.41px;font-size:15px;color:#8c8c8c;font-family:"DejaVu Sans Condensed","Liberation Sans",sans-serif;letter-spacing:0.433px;'>PIO</span>
<div style="left:944.2px;top:252.2px;width:23.5px;height:12.2px;background:#7f7f7f;border:1.300px solid #222;"></div>
<div style="left:943.8px;top:290.9px;width:69.3px;height:26.2px;background:#e2e2e2;"></div>
<span class="t" style='left:958.30px;top:297.41px;font-size:15px;color:#1c1c1c;font-family:"DejaVu Sans Condensed","Liberation Sans",sans-serif;letter-spacing:0.450px;'>Sleep</span>
<div style="left:943.8px;top:368.2px;width:69.3px;height:26.2px;background:#e2e2e2;"></div>
<span class="t" style='left:957.30px;top:374.80px;font-size:15px;color:#1c1c1c;font-family:"DejaVu Sans Condensed","Liberation Sans",sans-serif;letter-spacing:0.299px;'>Recall</span>
<div style="left:943.8px;top:604.8px;width:69.3px;height:26.2px;background:#e2e2e2;"></div>
<span class="t" style='left:958.30px;top:611.41px;font-size:15px;color:#1c1c1c;font-family:"DejaVu Sans Condensed","Liberation Sans",sans-serif;letter-spacing:0.481px;'>Passp</span>
<div style="left:941.6px;top:517.7px;width:33.3px;height:15.2px;background:#a0a0a0;border:1.500px solid #2e2e2e;border-radius:2.500px;"></div>
<div style="left:941.6px;top:517.700px;width:33.300px;height:15.200px;line-height:15px;text-align:center;font-size:11px;font-weight:700;color:#c3c3c3;font-family:"DejaVu Sans","Liberation Sans",sans-serif">WR</div>
<div style="left:981.9px;top:517.7px;width:33.3px;height:15.2px;background:#a0a0a0;border:1.500px solid #2e2e2e;border-radius:2.500px;"></div>
<div style="left:981.9px;top:517.700px;width:33.300px;height:15.200px;line-height:15px;text-align:center;font-size:11px;font-weight:700;color:#c3c3c3;font-family:"DejaVu Sans","Liberation Sans",sans-serif">RD</div>
<div style="left:944px;top:680px;width:16px;height:16px;background:#fff;border:1px solid #333;"></div><svg style="left:944px;top:680px" width="16" height="16" viewBox="0 0 15 15"><path d="M2.600 7.400l3.600 3.700L12.600 3.600" fill="none" stroke="#444" stroke-width="1.5"/></svg>
<div style="left:944px;top:708.6px;width:16px;height:16px;background:#fff;border:1px solid #333;"></div><svg style="left:944px;top:708.6px" width="16" height="16" viewBox="0 0 15 15"><path d="M2.600 7.400l3.600 3.700L12.600 3.600" fill="none" stroke="#444" stroke-width="1.5"/></svg>
<span class="t" style='left:967.20px;top:681.21px;font-size:15px;color:#1e1e1e;font-family:"DejaVu Sans Condensed","Liberation Sans",sans-serif;letter-spacing:-0.104px;'>Sound</span>
<span class="t" style='left:967.20px;top:709.80px;font-size:15px;color:#1e1e1e;font-family:"DejaVu Sans Condensed","Liberation Sans",sans-serif;letter-spacing:-0.445px;'>Hints</span>
<div style="left:16px;top:663.5px;width:916px;height:5.5px;background:#f0f0f0;"></div>
<div style="left:17px;top:668.6px;width:915px;height:155.2px;background:#f3f3f3;border-top:1.200px solid #9d9d9d;border-left:1px solid #c8c8c8;"></div>
<div style="left:18px;top:694.8px;width:892px;height:1px;background:#f8f8f8;"></div>
<div style="left:18px;top:719.8px;width:892px;height:1px;background:#f8f8f8;"></div>
<div style="left:18px;top:744.8px;width:892px;height:1px;background:#f8f8f8;"></div>
<div style="left:18px;top:769.8px;width:892px;height:1px;background:#f8f8f8;"></div>
<div style="left:18px;top:794.8px;width:892px;height:1px;background:#f8f8f8;"></div>
<div style="left:106.5px;top:670px;width:1px;height:153px;background:#f9f9f9;"></div>
<div style="left:909.8px;top:670px;width:21.6px;height:153.6px;background:#f0f0f0;"></div>
<div style="left:910.5px;top:780px;width:18.6px;height:21px;background:#cdcdcd;"></div>
<svg style="left:914.500px;top:678.500px" width="10" height="8" viewBox="0 0 10 8"><path d="M.800 6.800L5 2.200l4.200 4.600" fill="none" stroke="#4f4f4f" stroke-width="1.800"/></svg>
<span class="t" style='left:29.50px;top:678.00px;font-size:15px;color:#1c1c1c;font-family:"DejaVu Sans Condensed","Liberation Sans",sans-serif;letter-spacing:0.413px;'>17:17:18</span>
<span class="t" style='left:114.30px;top:678.00px;font-size:15px;color:#1c1c1c;font-family:"DejaVu Sans Condensed","Liberation Sans",sans-serif;letter-spacing:0.306px;'>Get drive passport... OK</span>
<span class="t" style='left:29.50px;top:702.91px;font-size:15px;color:#1c1c1c;font-family:"DejaVu Sans Condensed","Liberation Sans",sans-serif;letter-spacing:0.413px;'>17:17:19</span>
<span class="t" style='left:114.30px;top:702.91px;font-size:15px;color:#1c1c1c;font-family:"DejaVu Sans Condensed","Liberation Sans",sans-serif;letter-spacing:0.321px;'>Recallibration... OK</span>
<span class="t" style='left:29.50px;top:727.80px;font-size:15px;color:#1c1c1c;font-family:"DejaVu Sans Condensed","Liberation Sans",sans-serif;letter-spacing:0.413px;'>17:17:19</span>
<span class="t" style='left:114.30px;top:727.80px;font-size:15px;color:#1c1c1c;font-family:"DejaVu Sans Condensed","Liberation Sans",sans-serif;letter-spacing:0.334px;'>Starting Reading, LBA=0..976773167, FULL, sequential access, timeout 10000ms</span>
<span class="t" style='left:29.50px;top:752.71px;font-size:15px;color:#1c1c1c;font-family:"DejaVu Sans Condensed","Liberation Sans",sans-serif;letter-spacing:0.413px;'>19:01:22</span>
<span class="t" style='left:114.30px;top:752.01px;font-size:18.5px;color:#1c1c1c;font-family:"DejaVu Sans Condensed","Liberation Sans",sans-serif;letter-spacing:1.316px;'>***</span>
<span class="t" style='left:149.40px;top:752.71px;font-size:15px;color:#1c1c1c;font-family:"DejaVu Sans Condensed","Liberation Sans",sans-serif;letter-spacing:0.403px;'>Scan results: no warnings, no errors. Last block at 976773167 (500 GB), time 1 hours 44 minutes 4 secon.</span>
<span class="t" style='left:29.50px;top:777.61px;font-size:15px;color:#1c1c1c;font-family:"DejaVu Sans Condensed","Liberation Sans",sans-serif;letter-spacing:0.413px;'>19:01:22</span>
<span class="t" style='left:114.30px;top:777.61px;font-size:15px;color:#2424e0;font-family:"DejaVu Sans Condensed","Liberation Sans",sans-serif;letter-spacing:0.464px;'>Speed: Maximum 104 MB/s. Average 75 MB/s. Minimum 47 MB/s. 434 points.</span>
</div></body></html>
